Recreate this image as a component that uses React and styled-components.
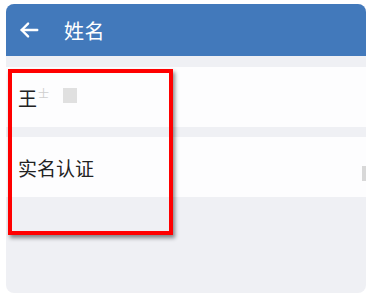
import styled, { createGlobalStyle } from "styled-components";

const GlobalStyle = createGlobalStyle`
  body {
    margin: 0;
    background: #ffffff;
    font-family: "Noto Sans CJK SC", "Noto Sans", sans-serif;
  }
`;

const Phone = styled.div`
  position: relative;
  width: 360px;
  height: 289px;
  margin: 4px 0 0 6px;
  border-radius: 8px;
  overflow: hidden;
  background: #eff0f4;
  display: flex;
  flex-direction: column;
`;

const Header = styled.div`
  height: 52px;
  background: #4279bb;
  display: flex;
  align-items: center;
  padding-left: 12px;
  color: #fff;
`;

const Title = styled.span`
  margin-left: 24px;
  font-size: 20px;
  letter-spacing: 0.5px;
`;

const List = styled.div`
  display: flex;
  flex-direction: column;
  gap: 10px;
  padding-top: 11px;
`;

const Row = styled.div`
  height: 60px;
  background: #fdfdfe;
  display: flex;
  align-items: center;
  padding-left: 12px;
  font-size: 19px;
  color: #222;
  position: relative;
`;

const Blur = styled.span`
  display: inline-block;
  width: 14px;
  height: 15px;
  margin-left: 14px;
  margin-bottom: 4px;
  background: #e0e0e0;
`;

const Faint = styled.span`
  color: #cfcfcf;
  font-size: 11px;
  margin-left: 1px;
  margin-bottom: 8px;
`;

const EdgeMark = styled.span`
  position: absolute;
  right: 0;
  top: 29px;
  width: 4px;
  height: 15px;
  background: #d8d8d8;
`;

const Highlight = styled.div`
  position: absolute;
  left: 2px;
  top: 65px;
  width: 157px;
  height: 158px;
  border: 4px solid #ff0000;
  box-shadow: 2px 3px 4px rgba(0, 0, 0, 0.45);
`;

const BackArrow = () => (
  <svg width="22" height="22" viewBox="0 0 24 24" fill="none" stroke="#fff" strokeWidth="2.6" strokeLinecap="round" strokeLinejoin="round">
    <path d="M21 12H4" />
    <path d="M11 5l-7 7 7 7" />
  </svg>
);

export default function App() {
  return (
    <>
      <GlobalStyle />
      <Phone>
        <Header>
          <BackArrow />
          <Title>姓名</Title>
        </Header>
        <List>
          <Row>
            王<Faint>士</Faint>
            <Blur />
          </Row>
          <Row>
            实名认证
            <EdgeMark />
          </Row>
        </List>
        <Highlight />
      </Phone>
    </>
  );
}
